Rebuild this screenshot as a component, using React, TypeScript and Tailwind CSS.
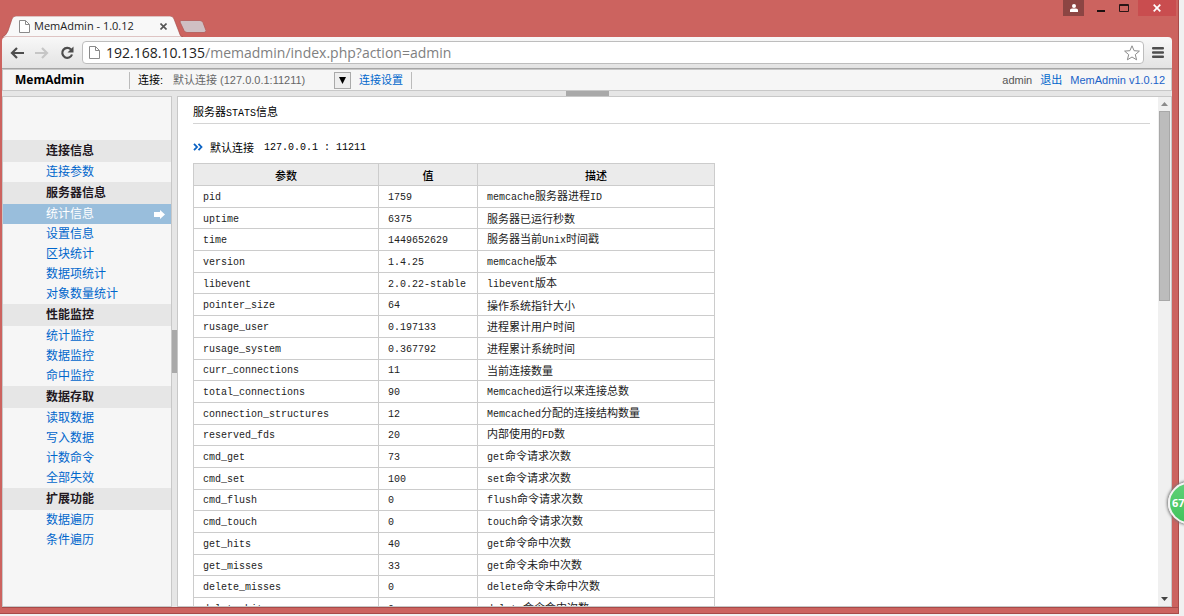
import { useState } from 'react'

type Group = { title: string; items: string[] }

const MENU: Group[] = [
  { title: '连接信息', items: ['连接参数'] },
  { title: '服务器信息', items: ['统计信息', '设置信息', '区块统计', '数据项统计', '对象数量统计'] },
  { title: '性能监控', items: ['统计监控', '数据监控', '命中监控'] },
  { title: '数据存取', items: ['读取数据', '写入数据', '计数命令', '全部失效'] },
  { title: '扩展功能', items: ['数据遍历', '条件遍历'] },
]

const STATS: [string, string, string][] = [
  ['pid', '1759', 'memcache服务器进程ID'],
  ['uptime', '6375', '服务器已运行秒数'],
  ['time', '1449652629', '服务器当前Unix时间戳'],
  ['version', '1.4.25', 'memcache版本'],
  ['libevent', '2.0.22-stable', 'libevent版本'],
  ['pointer_size', '64', '操作系统指针大小'],
  ['rusage_user', '0.197133', '进程累计用户时间'],
  ['rusage_system', '0.367792', '进程累计系统时间'],
  ['curr_connections', '11', '当前连接数量'],
  ['total_connections', '90', 'Memcached运行以来连接总数'],
  ['connection_structures', '12', 'Memcached分配的连接结构数量'],
  ['reserved_fds', '20', '内部使用的FD数'],
  ['cmd_get', '73', 'get命令请求次数'],
  ['cmd_set', '100', 'set命令请求次数'],
  ['cmd_flush', '0', 'flush命令请求次数'],
  ['cmd_touch', '0', 'touch命令请求次数'],
  ['get_hits', '40', 'get命令命中次数'],
  ['get_misses', '33', 'get命令未命中次数'],
  ['delete_misses', '0', 'delete命令未命中次数'],
  ['delete_hits', '0', 'delete命令命中次数'],
]

// latin runs are set in a smaller monospace than the chinese around them
function Mixed({ text }: { text: string }) {
  return (
    <>
      {text.split(/([\x21-\x7e]+)/).filter(Boolean).map((part, i) =>
        /^[\x21-\x7e]/.test(part)
          ? <span key={i} className="text-[10px] font-['Liberation_Mono',monospace]">{part}</span>
          : <span key={i}>{part}</span>
      )}
    </>
  )
}

function PageIcon() {
  return (
    <svg className="shrink-0" width="11" height="13" viewBox="0 0 11 13" fill="#fff" stroke="#8a8a8a">
      <path d="M.5.5h6l4 4v8H.5z" />
      <path d="M6.5.5v4h4" fill="none" />
    </svg>
  )
}

function TitleBar() {
  return (
    <div className="flex h-[37px] shrink-0 items-start justify-between">
      <div className="flex items-end self-end">
        <div className="relative flex h-[21px] w-[181px] items-center pl-[17px]">
          <svg className="absolute left-0 top-0" width="181" height="21" viewBox="0 0 181 21">
            <path d="M0 21Q4 20 6 15L10 3Q11 0 14 0H168Q171 0 172 3L177 16Q178 21 181 21z" fill="#f8f8f8" stroke="#a34a48" strokeWidth=".6" />
          </svg>
          <div className="relative flex flex-1 items-center">
            <PageIcon />
            <span className="ml-1 text-[11px] text-[#222] font-['Open_Sans',sans-serif]">MemAdmin - 1.0.12</span>
            <button aria-label="关闭标签页" className="absolute right-4">
              <svg width="7" height="7" viewBox="0 0 7 7" stroke="#555" strokeWidth="1.6"><path d="M.5.5l6 6M6.5.5l-6 6" /></svg>
            </button>
          </div>
        </div>
        <button aria-label="新标签页" className="mb-1">
          <svg className="-ml-1" width="27" height="13" viewBox="0 0 27 13">
            <path d="M2 .5h19q2 0 3 2l3 8q0 2-2 2H8q-2 0-3-2L1 2Q1 .5 2 .5z" fill="#cfbfc3" stroke="#b35a58" strokeWidth=".8" />
          </svg>
        </button>
      </div>
      <div className="flex">
        <button aria-label="用户" className="mr-2 flex h-4 w-[21px] items-center justify-center bg-[#8c4543]">
          <svg width="8" height="8" viewBox="0 0 8 8" fill="#fff"><circle cx="4" cy="2" r="2" /><path d="M0 8V6q0-1.500 2-1.500h4q2 0 2 1.500v2z" /></svg>
        </button>
        <button aria-label="最小化" className="flex h-4 w-[18px] items-center justify-center">
          <svg width="8" height="9" viewBox="0 0 8 9"><path d="M0 6h8v2H0z" fill="#1c1010" /></svg>
        </button>
        <button aria-label="最大化" className="flex h-4 w-7 items-center justify-center">
          <svg width="10" height="8" viewBox="0 0 10 8" fill="none" stroke="#2a1616"><path d="M.5.5h9v7h-9z" /><path d="M0 1.500h10" /></svg>
        </button>
        <button aria-label="关闭" className="mr-[2px] flex h-4 w-[38px] items-center justify-center bg-[#c94d4f]">
          <svg width="8" height="8" viewBox="0 0 8 8" stroke="#fff" strokeWidth="1.700"><path d="M.7.7l6.600 6.600M7.300.7L.7 7.300" /></svg>
        </button>
      </div>
    </div>
  )
}

function Toolbar() {
  return (
    <div className="mr-[6px] flex h-8 shrink-0 items-center rounded-t-sm border-b border-[#a5a5a5] bg-gradient-to-b from-[#f8f8f8] to-[#e3e3e3] pl-2">
      <button aria-label="后退">
        <svg width="14" height="12" viewBox="0 0 14 12" fill="none" stroke="#4d4d4d" strokeWidth="2.200"><path d="M14 6H2M7 1L2 6l5 5" /></svg>
      </button>
      <button aria-label="前进" className="ml-[11px]">
        <svg width="14" height="12" viewBox="0 0 14 12" fill="none" stroke="#c6c6c6" strokeWidth="2.200"><path d="M0 6h12M7 1l5 5-5 5" /></svg>
      </button>
      <button aria-label="刷新" className="ml-[11px]">
        <svg width="14" height="14" viewBox="0 0 14 14"><path d="M11 3.500A5 5 0 1 0 12 8.500" fill="none" stroke="#4d4d4d" strokeWidth="2.200" /><path d="M13.500.5V6.500H7.500z" fill="#4d4d4d" /></svg>
      </button>
      <div className="ml-2 flex h-[23px] flex-1 items-center rounded-sm border border-[#bdbdbd] bg-white pl-[6px] pr-[3px]">
        <PageIcon />
        <span className="ml-[6px] flex-1 whitespace-nowrap text-[14px] leading-5 text-[#808080] font-['Open_Sans',sans-serif]">
          <span className="text-[#222]">192.168.10.135</span>/memadmin/index.php?action=admin
        </span>
        <button aria-label="收藏">
          <svg width="16" height="16" viewBox="0 0 16 16" fill="#fff" stroke="#8b8b8b" strokeLinejoin="round"><path d="M8 .8l2.100 4.900 5.300.4-4.100 3.500 1.300 5.200L8 12l-4.600 2.800 1.300-5.200L.6 6.100l5.300-.4z" /></svg>
        </button>
      </div>
      <button aria-label="菜单" className="mx-2">
        <svg width="12" height="11" viewBox="0 0 12 11" fill="#4d4d4d"><rect width="12" height="2.500" rx="1" /><rect y="4.200" width="12" height="2.500" rx="1" /><rect y="8.500" width="12" height="2.500" rx="1" /></svg>
      </button>
    </div>
  )
}

function Header() {
  return (
    <header className="flex h-[22px] shrink-0 items-center border border-[#c8c8c8] bg-[#f6f6f6] text-[11px] font-['Liberation_Sans','Noto_Sans_CJK_SC',sans-serif]">
      <h1 className="w-[126px] pl-3 text-[12px] font-bold text-black font-['Open_Sans',sans-serif]">MemAdmin</h1>
      <div className="flex h-[17px] items-center border-x border-[#bbb] pl-2 pr-2">
        <label htmlFor="conn" className="w-[35px] text-black">连接:</label>
        <div className="relative">
          <select id="conn" className="h-[17px] w-[178px] appearance-none bg-transparent text-[#666]">
            <option>默认连接 (127.0.0.1:11211)</option>
          </select>
          <span className="pointer-events-none absolute right-0 top-0 flex h-[17px] w-[17px] items-center justify-center border border-[#aaa] bg-[#eee]">
            <svg width="7" height="7" viewBox="0 0 7 7"><path d="M0 0h7L3.500 7z" fill="#000" /></svg>
          </span>
        </div>
        <a href="#" className="ml-2 text-[#0066cc]">连接设置</a>
      </div>
      <div className="ml-auto flex gap-2 pr-[6px]">
        <span className="text-[#555]">admin</span>
        <a href="#" className="text-[#0066cc]">退出</a>
        <a href="#" className="text-[#1a62c8]">MemAdmin v1.0.12</a>
      </div>
    </header>
  )
}

function Sidebar() {
  const [active, setActive] = useState('统计信息')
  return (
    <nav className="w-[170px] shrink-0 border border-[#c8c8c8] bg-[#f6f6f6] pt-[43px] text-[12px] font-['Liberation_Sans','Noto_Sans_CJK_SC',sans-serif]">
      {MENU.map(g => (
        <div key={g.title}>
          <h2 className="bg-[#e6e6e6] pl-[43px] font-bold leading-[22px] text-[#22181f]">{g.title}</h2>
          {g.items.map(item => (
            <a
              key={item}
              href="#"
              onClick={() => setActive(item)}
              className={`flex items-center justify-between pl-[43px] pr-[6px] leading-5 ${
                active === item ? 'bg-[#99bedc] text-white' : 'text-[#0066cc]'
              }`}
            >
              {item}
              {active === item && (
                <svg width="11" height="9" viewBox="0 0 11 9" fill="#fff"><path d="M0 2h6V0l5 4.500L6 9V7H0z" /></svg>
              )}
            </a>
          ))}
        </div>
      ))}
    </nav>
  )
}

function Scrollbar() {
  return (
    <div className="flex w-[13px] shrink-0 flex-col items-center bg-[#f0f0f0]">
      <svg className="my-[5px] shrink-0" width="7" height="4" viewBox="0 0 7 4"><path d="M0 4l3.500-4L7 4z" fill="#8b8b8b" /></svg>
      <div className="h-[190px] w-[11px] shrink-0 border border-[#a8a8a8] bg-[#bcbcbc]" />
      <svg className="mb-[5px] mt-auto shrink-0" width="7" height="4" viewBox="0 0 7 4"><path d="M0 0h7L3.500 4z" fill="#444" /></svg>
    </div>
  )
}

function Content() {
  return (
    <main className="flex min-w-0 flex-1 border border-[#c8c8c8] bg-white text-[11px] text-[#222] font-['Noto_Sans_CJK_SC',sans-serif]">
      <div className="min-w-0 flex-1 overflow-hidden pl-[15px] pr-2 pt-1">
        <h2 className="h-[23px] border-b border-[#d4d4d4] leading-5 text-black"><Mixed text="服务器STATS信息" /></h2>
        <h3 className="mt-[13px] flex h-5 items-center text-black">
          <svg width="10" height="8" viewBox="0 0 10 8" fill="none" stroke="#0a62c4" strokeWidth="1.800"><path d="M1 .8L4 4 1 7.200M5.500.8l3 3.200-3 3.200" /></svg>
          <span className="ml-[7px]">默认连接</span>
          <span className="ml-[10px] whitespace-pre text-[10px] font-['Liberation_Mono',monospace]">127.0.0.1 : 11211</span>
        </h3>
        <table className="mt-[6px] h-[457px] w-[522px] table-fixed border-collapse leading-4">
          <thead>
            <tr className="h-[22px] bg-[#ebebeb] text-black">
              <th className="w-[185px] border border-[#ccc] font-medium">参数</th>
              <th className="w-[99px] border border-[#ccc] font-medium">值</th>
              <th className="border border-[#ccc] font-medium">描述</th>
            </tr>
          </thead>
          <tbody>
            {STATS.map(row => (
              <tr key={row[0]}>
                {row.map((cell, i) => (
                  <td key={i} className="whitespace-nowrap border border-[#ccc] pl-[9px]"><Mixed text={cell} /></td>
                ))}
              </tr>
            ))}
          </tbody>
        </table>
      </div>
      <Scrollbar />
    </main>
  )
}

export default function App() {
  return (
    <div className="relative flex h-screen overflow-hidden bg-[#f1f1f1] pb-[2px] pr-[5px]">
      <div className="flex min-w-0 flex-1 flex-col border-b border-r border-[#a84a48] bg-[#cc635f] pl-[2px]">
        <TitleBar />
        <Toolbar />
        <div className="mr-[6px] flex min-h-0 flex-1 flex-col bg-[#e6e6e6]">
          <Header />
          <div className="flex h-[5px] shrink-0 justify-center">
            <div className="w-[43px] bg-[#a9a9a9]" />
          </div>
          <div className="flex min-h-0 flex-1">
            <Sidebar />
            <div className="flex w-[5px] shrink-0 items-center">
              <div className="h-[43px] w-full bg-[#a9a9a9]" />
            </div>
            <Content />
          </div>
        </div>
        <div className="h-[6px] shrink-0 border-t border-[#a84a48]" />
      </div>
      {/* floating speed ball, half off screen */}
      <div className="absolute -right-[26px] top-[482px] flex h-[42px] w-[42px] items-center rounded-full border-2 border-[#f4f4f4] bg-gradient-to-b from-[#5fd077] to-[#3fc45c] pl-[2px] text-[11px] font-bold text-white shadow-[0_0_3px_1px_#777] font-['Open_Sans',sans-serif]">
        67
      </div>
    </div>
  )
}
